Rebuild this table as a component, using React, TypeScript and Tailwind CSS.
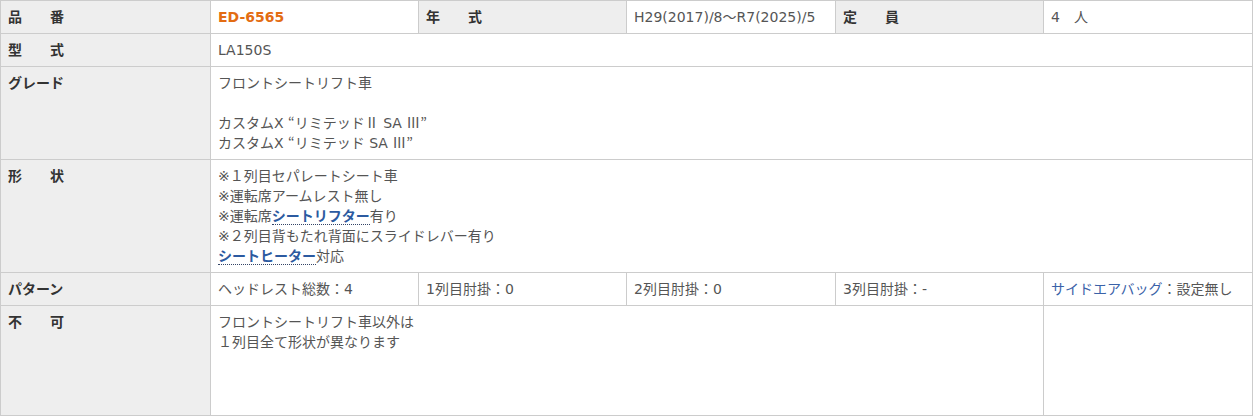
import React from 'react';

const th = 'border border-[#cccccc] bg-[#eeeeee] px-[7px] py-[6px] text-left align-top font-bold text-[#333333]';
const td = 'border border-[#cccccc] bg-white px-[7px] py-[6px] text-left align-top text-[#555555]';

const Link: React.FC<{ children: React.ReactNode }> = ({ children }) => (
  <span className="border-b border-dotted border-[#334466] font-bold text-[#2c5aa0]">{children}</span>
);

// fullwidth glyphs (quotes, roman numerals) come from the CJK face
const J: React.FC<{ children: React.ReactNode }> = ({ children }) => (
  <span className="font-['Noto_Sans_CJK_JP'] leading-none">{children}</span>
);

export default function App() {
  return (
    <div
      className="bg-white text-[14px] leading-[20px]"
      style={{ fontFamily: '"DejaVu Sans", "Noto Sans CJK JP", sans-serif' }}
    >
      <table className="w-[1252px] table-fixed border-collapse">
        <colgroup>
          <col className="w-[210px]" />
          <col className="w-[208px]" />
          <col className="w-[208px]" />
          <col className="w-[209px]" />
          <col className="w-[208px]" />
          <col className="w-[209px]" />
        </colgroup>
        <tbody>
          <tr>
            <th className={th}>品　　番</th>
            <td className={td}>
              <span className="font-bold text-[#e36c12]">ED-6565</span>
            </td>
            <th className={th}>年　　式</th>
            <td className={td}>H29(2017)/8～R7(2025)/5</td>
            <th className={th}>定　　員</th>
            <td className={td}>4　人</td>
          </tr>
          <tr>
            <th className={th}>型　　式</th>
            <td className={td} colSpan={5}>LA150S</td>
          </tr>
          <tr>
            <th className={th}>グレード</th>
            <td className={td} colSpan={5}>
              フロントシートリフト車
              <br />
              <br />
              カスタムX <J>“</J>リミテッド<J>Ⅱ</J> SA <J>Ⅲ”</J>
              <br />
              カスタムX <J>“</J>リミテッド SA <J>Ⅲ”</J>
            </td>
          </tr>
          <tr>
            <th className={th}>形　　状</th>
            <td className={td} colSpan={5}>
              ※１列目セパレートシート車
              <br />
              ※運転席アームレスト無し
              <br />
              ※運転席<Link>シートリフター</Link>有り
              <br />
              ※２列目背もたれ背面にスライドレバー有り
              <br />
              <Link>シートヒーター</Link>対応
            </td>
          </tr>
          <tr>
            <th className={th}>パターン</th>
            <td className={td}>ヘッドレスト総数：4</td>
            <td className={td}>1列目肘掛：0</td>
            <td className={td}>2列目肘掛：0</td>
            <td className={td}>3列目肘掛：-</td>
            <td className={td}>
              <span className="text-[#3a62a8]">サイドエアバッグ</span>：設定無し
            </td>
          </tr>
          <tr className="h-[110px]">
            <th className={th}>不　　可</th>
            <td className={td} colSpan={4}>
              フロントシートリフト車以外は
              <br />
              １列目全て形状が異なります
            </td>
            <td className={td}></td>
          </tr>
        </tbody>
      </table>
    </div>
  );
}
